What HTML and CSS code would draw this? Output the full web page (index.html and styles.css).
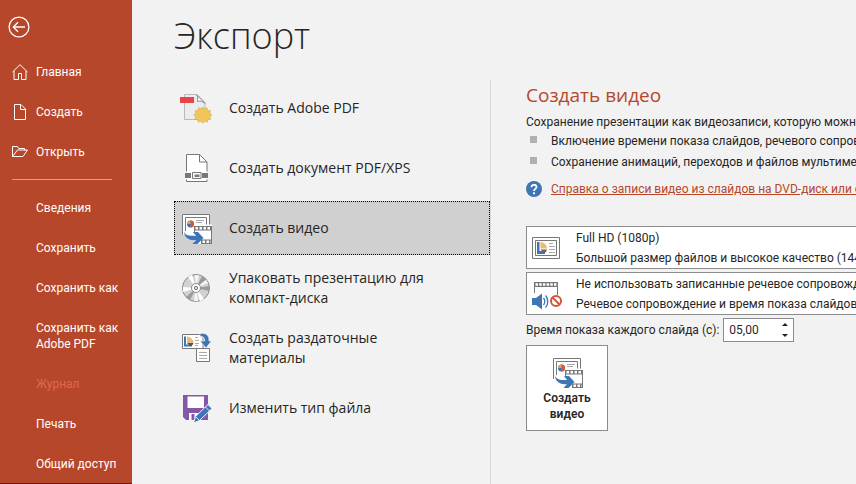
FILE: index.html
```html
<!DOCTYPE html>
<html lang="ru">
<head>
  <meta charset="UTF-8">
  <title>Экспорт</title>
  <link rel="stylesheet" href="styles.css">
</head>
<body>
  <!-- shared icon, used in the list and on the big button -->
  <svg class="sprite" aria-hidden="true">
    <symbol id="video" viewBox="0 0 32 32">
      <path d="M2.500 2.500h27v10H32V32H14v-9H2.500z" fill="#fff"/>
      <path d="M2.500 23V2.500h27v10M5.500 19V5.500h21v7" fill="none" stroke="#777"/>
      <path d="M16 8.500h8M16 10.500h6" stroke="#aaa"/>
      <circle cx="10.500" cy="12" r="3.500" fill="#3e76b5"/>
      <path d="M10.500 12V8.500a3.500 3.500 0 0 1 0 7z" fill="#d9583b"/>
      <path d="M10.500 12H7a3.500 3.500 0 0 1 3.500-3.500z" fill="#e8a04c"/>
      <path d="M14 14h18v18H18V28h-4z" fill="#fff"/>
      <path d="M14 14h18v4.500H14zM21 27.500h11V32H21z" fill="#777"/>
      <path d="M14.500 14v7M31.500 14v18" stroke="#777"/>
      <path d="M15.500 16.300h15" stroke="#fff" stroke-width="2.400" stroke-dasharray="2.500 1.500"/>
      <path d="M22.500 29.800h8.500" stroke="#fff" stroke-width="2.400" stroke-dasharray="2.500 1.500"/>
      <path d="M4 20c2 3.500 6 4.500 12 4l-3-4h5l5.500 6-6 6h-5l3.500-4C10 29 4.500 26 4 20z" fill="#3e76b5"/>
    </symbol>
  </svg>

  <div class="backstage">
    <nav class="sidebar">
      <button class="back" aria-label="Назад">
        <svg width="22" height="22" viewBox="0 0 22 22" fill="none" stroke="#fff" stroke-width="1.300">
          <circle cx="11" cy="11" r="9.900"/>
          <path d="M17 11H5.500M10 6.300L5.300 11l4.700 4.700"/>
        </svg>
      </button>
      <a class="nav-item" href="#">
        <svg width="16" height="16" viewBox="0 0 16 16" fill="none" stroke="#fff">
          <path d="M.5 8L8 .7 15.500 8M2 7v8.500h4.500v-6h3v6H14V7"/>
        </svg>
        Главная
      </a>
      <a class="nav-item" href="#">
        <svg width="16" height="16" viewBox="0 0 16 16" fill="none" stroke="#fff">
          <path d="M2.500.5h6.500L13.500 5v10.500h-11zM8.500.5v5h5"/>
        </svg>
        Создать
      </a>
      <a class="nav-item" href="#">
        <svg width="16" height="16" viewBox="0 0 16 16" fill="none" stroke="#fff">
          <path d="M.5 12.500V2.500h5l1 2h6v2M.5 12.500h10.500l4.500-6.500H5.500z"/>
        </svg>
        Открыть
      </a>
      <hr class="divider">
      <a class="nav-item text-only" href="#">Сведения</a>
      <a class="nav-item text-only" href="#">Сохранить</a>
      <a class="nav-item text-only" href="#">Сохранить как</a>
      <a class="nav-item text-only" href="#">Сохранить как<br>Adobe PDF</a>
      <a class="nav-item text-only disabled" aria-disabled="true">Журнал</a>
      <a class="nav-item text-only" href="#">Печать</a>
      <a class="nav-item text-only" href="#">Общий доступ</a>
    </nav>

    <main class="main">
      <h1>Экспорт</h1>
      <div class="columns">
        <div class="export-list">
          <button class="export-item">
            <svg width="32" height="32" viewBox="0 0 32 32">
              <path d="M4.500 2.500H17l8 8v17H4.500z" fill="#ececee" stroke="#b9b9bd"/>
              <path d="M16.500 2.500c2 2 1 5 1 7 3-1 5 0 7.500 2z" fill="#fff" stroke="#8c8c90"/>
              <path d="M0 5h14v6H0z" fill="#e8434a"/>
              <path d="M22.700 15l1.800 2 2.500-1.200.6 2.700 2.800.2-.6 2.600 2.200 1.800-2.100 1.700.7 2.700-2.800.2-.6 2.600-2.500-1.100-1.900 2.100-1.900-2.100-2.500 1.100-.6-2.600-2.800-.2.700-2.700-2.100-1.700 2.200-1.800-.6-2.600 2.800-.2.600-2.700 2.500 1.200z" fill="#f0c65c" stroke="#d9a840" stroke-width=".6"/>
            </svg>
            <span>Создать Adobe PDF</span>
          </button>
          <button class="export-item">
            <svg width="32" height="32" viewBox="0 0 32 32">
              <path d="M6.500 2.500h13l7.500 7.500v19.500H6.500z" fill="#fff"/>
              <path d="M6.500 19.500v-17h13l7.500 7.500v9.500M19.500 2.500V10H27M6.500 27.500v2H27v-2" fill="none" stroke="#777"/>
              <path d="M5 21h6v5H5zM22 21h6v5h-6zM14.500 22.500h5v2.500h-5z" fill="#777"/>
              <path d="M12.500 20.500h8.500v6h-8.500z" fill="none" stroke="#777"/>
            </svg>
            <span>Создать документ PDF/XPS</span>
          </button>
          <button class="export-item active">
            <svg width="32" height="32"><use href="#video"/></svg>
            <span>Создать видео</span>
          </button>
          <button class="export-item">
            <svg width="32" height="32" viewBox="0 0 32 32">
              <circle cx="16" cy="16" r="13.500" fill="#d2d2d2" stroke="#8a8a8a"/>
              <path d="M16 16L8 5l4-2.300zM16 16l8 11-4 2.300zM16 16L3 20v-5z" fill="#fff"/>
              <path d="M16 16l6-12 4 3.500zM16 16L6 25l4 3zM16 16l13-2v5z" fill="#9b9b9b"/>
              <path d="M16 16l10-8 2 3zM16 16l-1-13 4 .3zM16 16l-2 13 4 .3z" fill="#f6f6f6"/>
              <circle cx="16" cy="16" r="4.500" fill="#fff" stroke="#8a8a8a"/>
              <circle cx="16" cy="16" r="1.700" fill="#ddd" stroke="#777"/>
            </svg>
            <span>Упаковать презентацию для компакт-диска</span>
          </button>
          <button class="export-item">
            <svg width="32" height="32" viewBox="0 0 32 32">
              <path d="M2.500 2.500h20.500v14H2.500z" fill="#fff" stroke="#777"/>
              <path d="M4 4.500h2v8h6v2H4z" fill="#3e76b5"/>
              <path d="M7 4.500a6.500 6.500 0 0 1 6.500 6.500H7z" fill="#ecb978"/>
              <path d="M7 11h6.500c-.5 2-2 3-3.500 3z" fill="#555"/>
              <path d="M15 5.500h3M15 8.500h4M15 11.500h4M15 13.500h3" stroke="#aaa"/>
              <path d="M16.500 16.500h13v13h-13z" fill="#fff" stroke="#777"/>
              <path d="M19 20.500h8M19 23.500h8M19 26.500h8" stroke="#aaa"/>
              <path d="M20 1.500c6-1 9.500 2 9 7.500h2.500L26 16 20 9h4.500c.3-3-1-5-4.500-4.500z" fill="#3e76b5" stroke="#f3f3f3" stroke-width=".7"/>
            </svg>
            <span>Создать раздаточные материалы</span>
          </button>
          <button class="export-item">
            <svg width="32" height="32" viewBox="0 0 32 32">
              <path d="M3 3h25v25H6l-3-3z" fill="#8656a8"/>
              <path d="M7.500 4.500h16.500v11.500h-16.500zM9 21h10v7H9z" fill="#fff"/>
              <path d="M11.500 22h3v6h-3z" fill="#8656a8"/>
              <path d="M13.500 31l2-6.500L28 12.500l4 4-12.500 12z" fill="#3e76b5" stroke="#f3f3f3"/>
              <path d="M25.500 15l4 4M16 25l3.500 3.500" stroke="#fff" stroke-width=".8"/>
            </svg>
            <span>Изменить тип файла</span>
          </button>
        </div>

        <section class="details">
          <h2>Создать видео</h2>
          <p>Сохранение презентации как видеозаписи, которую можно</p>
          <ul>
            <li>Включение времени показа слайдов, речевого сопровождения</li>
            <li>Сохранение анимаций, переходов и файлов мультимедиа</li>
          </ul>
          <div class="help">
            <svg width="16" height="16" viewBox="0 0 16 16" fill="none">
              <circle cx="8" cy="8" r="8" fill="#3e76b5"/>
              <path d="M5.500 6.200C5.500 3 10.500 3 10.500 6c0 1.900-2.500 1.900-2.500 4" stroke="#fff" stroke-width="1.800"/>
              <path d="M7 11.300h2v1.900H7z" fill="#fff"/>
            </svg>
            <a href="#">Справка о записи видео из слайдов на DVD-диск или отправке</a>
          </div>

          <div class="combo">
            <svg width="32" height="32" viewBox="0 0 32 32">
              <path d="M2.500 5.500h27v21h-27zM5.500 8.500h21v15h-21z" fill="#fff" stroke="#777"/>
              <path d="M7 10h2.500v9H15v3H7z" fill="#3e76b5"/>
              <path d="M10.500 10a6.500 6.500 0 0 1 6.500 6.500h-6.500z" fill="#ecb978"/>
              <path d="M10.500 17.500H17c-.5 2.500-2 3.500-3.500 3.500z" fill="#666"/>
              <path d="M19 11.500h4M19 14.500h6M19 17.500h6M19 20.500h6" stroke="#aaa"/>
            </svg>
            <div class="combo-text">
              <select aria-label="Качество видео" aria-describedby="quality-note">
                <option>Full HD (1080p)</option>
              </select>
              <span id="quality-note">Большой размер файлов и высокое качество (1440 x 1080)</span>
            </div>
          </div>

          <div class="combo">
            <svg width="32" height="32" viewBox="0 0 32 32">
              <path d="M4 4h24v5H4z" fill="#777"/>
              <path d="M5.500 6.500h21" stroke="#fff" stroke-width="2.500" stroke-dasharray="2.500 1.200"/>
              <path d="M4.500 8v7M27.500 8v9" stroke="#777"/>
              <path d="M2 20h4l6-4.500v16L6 27H2z" fill="#3e76b5"/>
              <path d="M13.500 20c1.500 2 1.500 5 0 7M15.500 17.500c3 3 3 9 0 12" fill="none" stroke="#3e76b5" stroke-width="1.300"/>
              <circle cx="26" cy="23" r="5" fill="#fff" stroke="#d2583c" stroke-width="2"/>
              <path d="M22.500 19.500l7 7" stroke="#d2583c" stroke-width="2"/>
            </svg>
            <div class="combo-text">
              <select aria-label="Речевое сопровождение" aria-describedby="timing-note">
                <option>Не использовать записанные речевое сопровождение</option>
              </select>
              <span id="timing-note">Речевое сопровождение и время показа слайдов не</span>
            </div>
          </div>

          <div class="duration">
            <label for="seconds">Время показа каждого слайда (с):</label>
            <div class="spinner">
              <input id="seconds" type="text" value="05,00">
              <div class="spinner-buttons">
                <button class="up" aria-label="Больше"></button>
                <button class="down" aria-label="Меньше"></button>
              </div>
            </div>
          </div>

          <button class="create-btn">
            <svg width="32" height="32"><use href="#video"/></svg>
            <span>Создать<br>видео</span>
          </button>
        </section>
      </div>
    </main>
  </div>
</body>
</html>
```
FILE: styles.css
```css
* {
  box-sizing: border-box;
}

body {
  margin: 0;
  background: #f2f2f2;
  color: #262626;
  font-family: Roboto, "Noto Sans", sans-serif;
  font-size: 12px;
  line-height: 16px;
  overflow: hidden;
}

button {
  padding: 0;
  border: none;
  background: transparent;
  color: inherit;
  font: inherit;
}

svg {
  display: block;
  flex-shrink: 0;
}

.sprite {
  display: none;
}

.backstage {
  display: flex;
  min-height: 100vh;
}

/* sidebar */
.sidebar {
  width: 132px;
  flex-shrink: 0;
  height: 100vh;
  padding-top: 16px;
  background: #b7472a;
  border-bottom: 1px solid #7d1010;
}

.back {
  display: block;
  margin: 0 0 14px 8px;
}

.nav-item {
  display: flex;
  align-items: center;
  gap: 8px;
  padding: 12px 0 12px 12px;
  color: #fff;
  text-decoration: none;
  white-space: nowrap;
}

.text-only {
  padding-left: 36px;
}

.disabled {
  color: #e0684c;
}

.divider {
  margin: 7px 20px 8px 12px;
  border: none;
  border-top: 1px solid #e39a86;
}

/* main area */
.main {
  flex: 1;
  min-width: 0;
  padding: 12px 0 0 42px;
  overflow: hidden;
}

h1,
h2,
.export-item {
  font-family: "Open Sans", "Noto Sans", sans-serif;
}

h1 {
  margin: 0 0 20px;
  font-size: 36px;
  font-weight: 300;
  line-height: 48px;
}

.columns {
  display: flex;
  height: calc(100vh - 80px);
}

.export-list {
  display: flex;
  flex-direction: column;
  gap: 6px;
  width: 317px;
  flex-shrink: 0;
  padding-top: 1px;
  border-right: 1px solid #d8d8d8;
}

.export-item {
  display: flex;
  align-items: center;
  gap: 17px;
  height: 54px;
  padding: 0 40px 0 6px;
  font-size: 14px;
  line-height: 20px;
  text-align: left;
}

.active {
  background: #d0d0d0;
  outline: 1px dotted #000;
  outline-offset: -1px;
}

/* right panel */
.details {
  flex: 1;
  min-width: 400px;
  padding-left: 35px;
  white-space: nowrap;
}

h2 {
  margin: 0 0 3px;
  color: #b7472a;
  font-size: 19px;
  font-weight: 400;
  line-height: 31px;
}

p {
  margin: 0;
}

ul {
  margin: 0 0 9px;
  padding: 0;
  list-style: none;
}

li {
  display: flex;
  gap: 14px;
  padding: 3px 0 2px 4px;
}

li::before {
  content: "";
  flex-shrink: 0;
  width: 7px;
  height: 7px;
  margin-top: 3px;
  background: #b0b0b0;
}

.help {
  display: flex;
  gap: 9px;
  margin-bottom: 29px;
}

.help a {
  color: #b7472a;
}

.combo {
  display: flex;
  align-items: center;
  gap: 14px;
  height: 43px;
  margin-bottom: 3px;
  padding-left: 3px;
  background: #fff;
  border: 1px solid #8c8c8c;
}

.combo-text {
  display: flex;
  flex: 1;
  flex-direction: column;
  gap: 4px;
}

.combo select {
  width: 100%;
  height: 16px;
  padding: 0;
  border: none;
  appearance: none;
  background: transparent;
  color: inherit;
  font: inherit;
}

.duration {
  display: flex;
  align-items: center;
  gap: 4px;
  margin-bottom: 3px;
}

.spinner {
  display: flex;
  width: 71px;
  height: 24px;
  background: #fff;
  border: 1px solid #8c8c8c;
}

.spinner input {
  flex: 1;
  min-width: 0;
  padding: 0 0 0 5px;
  border: none;
  background: transparent;
  color: inherit;
  font: inherit;
}

.spinner-buttons {
  display: flex;
  flex-direction: column;
  justify-content: space-between;
  padding: 4px 5px;
}

.up,
.down {
  border: 3px solid transparent;
}

.up {
  border-top: none;
  border-bottom-color: #222;
}

.down {
  border-bottom: none;
  border-top-color: #222;
}

.create-btn {
  display: flex;
  flex-direction: column;
  align-items: center;
  gap: 2px;
  width: 82px;
  padding: 10px 0 8px;
  background: #fff;
  border: 1px solid #8c8c8c;
  font-weight: 600;
}
```
